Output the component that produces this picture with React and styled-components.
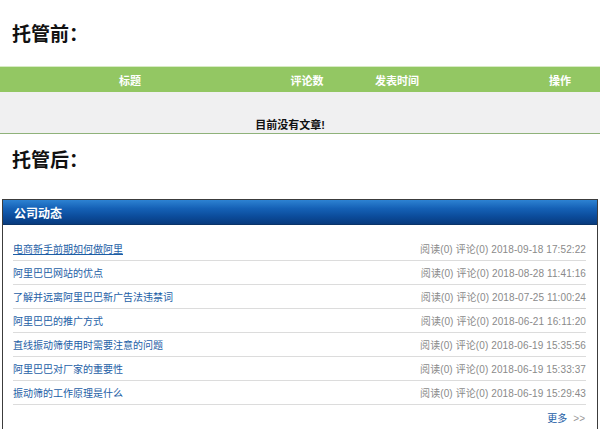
import React from 'react';
import styled, { createGlobalStyle } from 'styled-components';

const Global = createGlobalStyle`
	body {
		margin: 0;
		background: #fff;
		font-family: "Liberation Sans", "Noto Sans CJK SC", sans-serif;
	}
`;

const Page = styled.div`
	width: 600px;
	height: 429px;
	overflow: hidden;
`;

const Heading = styled.h2`
	margin: 0;
	padding: ${(p) => p.$top}px 0 0 12px;
	height: ${(p) => p.$height}px;
	box-sizing: border-box;
	font-size: 19px;
	line-height: 22px;
	font-weight: 600;
	color: #111;
`;

const OldTable = styled.div`
	width: 600px;
	border-bottom: 1px solid #8fb27a;
`;

const HeadRow = styled.div`
	display: grid;
	grid-template-columns: 260px 94px 86px 80px 80px;
	height: 25px;
	align-items: center;
	background: #93c763;
	border-top: 1px solid #d7ebc4;
`;

const HeadCell = styled.div`
	text-align: center;
	color: #fff;
	font-size: 11px;
	font-weight: bold;
`;

const Empty = styled.div`
	height: 41px;
	box-sizing: border-box;
	padding-top: 24px;
	background: #f0f0f1;
	text-align: center;
	font-size: 11px;
	font-weight: bold;
	color: #111;
	padding-right: 20px;
`;

const Panel = styled.div`
	margin-left: 2px;
	width: 596px;
	border: 1px solid #3c3c3c;
	border-bottom: none;
	box-sizing: border-box;
	height: 230px;
`;

const PanelHead = styled.div`
	height: 24px;
	display: flex;
	align-items: center;
	padding-left: 11px;
	background: linear-gradient(#2d82d2 0%, #1561b6 35%, #0b4b9a 70%, #083b7e 100%);
	border-bottom: 1px solid #0a3468;
	color: #fff;
	font-size: 12px;
	font-weight: bold;
`;

const List = styled.ul`
	list-style: none;
	margin: 0;
	padding: 12px 11px 0 10px;
`;

const Row = styled.li`
	display: flex;
	justify-content: space-between;
	align-items: center;
	height: 23px;
	border-bottom: 1px solid #dcdcdc;
	font-size: 10px;
`;

const Link = styled.a`
	color: #1d5ea6;
	text-decoration: ${(p) => (p.$active ? 'underline' : 'none')};
`;

const Meta = styled.span`
	color: #8a8a8a;
	font-size: 10px;
	letter-spacing: 0.1px;
`;

const More = styled.div`
	display: flex;
	justify-content: flex-end;
	gap: 6px;
	padding: 7px 12px 0 0;
	font-size: 10px;
	line-height: 14px;
`;

const MoreLink = styled.span`
	color: #1d5ea6;
`;

const Arrow = styled.span`
	color: #999;
`;

const news = [
	['电商新手前期如何做阿里', '2018-09-18 17:52:22'],
	['阿里巴巴网站的优点', '2018-08-28 11:41:16'],
	['了解并远离阿里巴巴新广告法违禁词', '2018-07-25 11:00:24'],
	['阿里巴巴的推广方式', '2018-06-21 16:11:20'],
	['直线振动筛使用时需要注意的问题', '2018-06-19 15:35:56'],
	['阿里巴巴对厂家的重要性', '2018-06-19 15:33:37'],
	['振动筛的工作原理是什么', '2018-06-19 15:29:43'],
];

export default function App() {
	return (
		<Page>
			<Global />
			<Heading $top={24} $height={66}>托管前：</Heading>
			<OldTable>
				<HeadRow>
					<HeadCell>标题</HeadCell>
					<HeadCell>评论数</HeadCell>
					<HeadCell>发表时间</HeadCell>
					<HeadCell />
					<HeadCell>操作</HeadCell>
				</HeadRow>
				<Empty>目前没有文章!</Empty>
			</OldTable>
			<Heading $top={16} $height={65}>托管后：</Heading>
			<Panel>
				<PanelHead>公司动态</PanelHead>
				<List>
					{news.map(([title, date], i) => (
						<Row key={title}>
							<Link $active={i === 0}>{title}</Link>
							<Meta>阅读(0) 评论(0) {date}</Meta>
						</Row>
					))}
				</List>
				<More>
					<MoreLink>更多</MoreLink>
					<Arrow>&gt;&gt;</Arrow>
				</More>
			</Panel>
		</Page>
	);
}
